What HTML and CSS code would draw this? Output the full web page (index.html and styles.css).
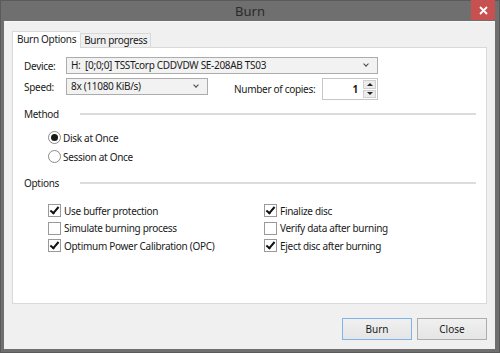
FILE: index.html
```html
<!DOCTYPE html>
<html lang="en">
<head>
    <meta charset="UTF-8">
    <title>Burn</title>
    <link rel="stylesheet" href="styles.css">
</head>
<body>
<div class="window">
    <div class="titlebar">
        <span></span>
        <span class="title">Burn</span>
        <span class="close">
            <svg width="9" height="9" viewBox="0 0 9 9"><path d="M1 1L8 8M8 1L1 8" stroke="#fff" stroke-width="1.8"/></svg>
        </span>
    </div>
    <div class="client">
        <div class="tabs">
            <div class="tab active">Burn Options</div>
            <div class="tab">Burn progress</div>
        </div>
        <div class="panel">
            <div class="row">
                <span class="lbl">Device:</span>
                <div class="select wide">H:&nbsp; [0;0;0] TSSTcorp CDDVDW SE-208AB TS03<span class="chev"></span></div>
            </div>
            <div class="row row2">
                <span class="lbl">Speed:</span>
                <div class="select narrow">8x (11080 KiB/s)<span class="chev"></span></div>
                <span class="copies">Number of copies:</span>
                <div class="spin">
                    <span class="val">1</span>
                    <span class="arrows">
                        <span class="up"></span>
                        <span class="down"></span>
                    </span>
                </div>
            </div>
            <div class="group">
                <span class="gtitle">Method</span><span class="gline"></span>
            </div>
            <div class="radios">
                <div class="opt"><span class="radio on"></span>Disk at Once</div>
                <div class="opt"><span class="radio"></span>Session at Once</div>
            </div>
            <div class="group group2">
                <span class="gtitle">Options</span><span class="gline"></span>
            </div>
            <div class="checks">
                <div class="opt"><span class="check on"></span>Use buffer protection</div>
                <div class="opt"><span class="check on"></span>Finalize disc</div>
                <div class="opt"><span class="check"></span>Simulate burning process</div>
                <div class="opt"><span class="check"></span>Verify data after burning</div>
                <div class="opt"><span class="check on"></span>Optimum Power Calibration (OPC)</div>
                <div class="opt"><span class="check on"></span>Eject disc after burning</div>
            </div>
        </div>
        <div class="buttons">
            <button class="btn default">Burn</button>
            <button class="btn">Close</button>
        </div>
    </div>
</div>
</body>
</html>
```

FILE: styles.css
```css
*{margin: 0; padding: 0; box-sizing: border-box;}
body{
    background: #6f6f6f;
    font-family: "Noto Sans", "Open Sans", sans-serif;
    font-size: 10px;
    letter-spacing: -0.3px;
    color: #1a1a1a;
}
.window{
    width: 500px;
    height: 353px;
    background: #6f6f6f;
    border: 1px solid #5a5a5a;
    display: flex;
    flex-direction: column;
}
.titlebar{
    height: 20px;
    display: grid;
    grid-template-columns: 1fr auto 1fr;
    align-items: center;
}
.title{
    font-size: 13px;
    letter-spacing: 0;
    color: #2a2a2a;
}
.close{
    justify-self: end;
    align-self: start;
    width: 24px;
    height: 20px;
    margin-right: 4px;
    margin-top: -1px;
    background: #c75050;
    display: flex;
    align-items: center;
    justify-content: center;
}
.client{
    margin: 0 4px 3px 3px;
    flex: 1;
    background: #f0f0f0;
    border-top: 1px solid #f7f7f7;
    padding: 9px 8px 0 8px;
    display: flex;
    flex-direction: column;
}
.tabs{
    display: flex;
    align-items: flex-end;
    height: 16px;
    position: relative;
    z-index: 1;
}
.tab{
    height: 14px;
    padding: 0 3px;
    border: 1px solid #d9d9d9;
    border-bottom: none;
    background: #f0f0f0;
    line-height: 12px;
}
.tab.active{
    height: 17px;
    background: #fff;
    margin-bottom: -1px;
    padding: 0 4px;
    line-height: 14px;
    border-right: none;
}
.panel{
    height: 257px;
    background: #fff;
    border: 1px solid #d9d9d9;
    padding: 9px 10px 0 11px;
}
.row{
    display: flex;
    align-items: center;
    height: 17px;
}
.row2{
    margin-top: 4px;
    height: 22px;
    align-items: flex-start;
}
.lbl{
    width: 42px;
    line-height: 18px;
}
.select{
    height: 17px;
    border: 1px solid #acacac;
    background: #f2f2f2;
    padding: 0 0 0 4px;
    line-height: 15px;
    display: flex;
    justify-content: space-between;
}
.select.wide{width: 312px;}
.select.narrow{width: 142px;}
.chev{
    width: 4px;
    height: 4px;
    border-right: 1px solid #444;
    border-bottom: 1px solid #444;
    transform: rotate(45deg);
    margin: 4px 9px 0 0;
}
.copies{
    margin-left: 26px;
    line-height: 22px;
    width: 88px;
}
.spin{
    width: 56px;
    height: 22px;
    border: 1px solid #c6c6c6;
    background: #fff;
    display: flex;
    justify-content: flex-end;
}
.val{
    line-height: 20px;
    font-weight: bold;
    padding-right: 5px;
}
.arrows{
    width: 14px;
    display: flex;
    flex-direction: column;
    gap: 1px;
    padding: 1px 1px 1px 0;
}
.arrows span{
    flex: 1;
    background: #ececec;
    border: 1px solid #d0d0d0;
    display: flex;
    align-items: center;
    justify-content: center;
}
.up::after, .down::after{
    content: "";
    border-left: 3px solid transparent;
    border-right: 3px solid transparent;
}
.up::after{border-bottom: 3px solid #222;}
.down::after{border-top: 3px solid #222;}
.group{
    display: flex;
    align-items: center;
    margin-top: 7px;
    height: 14px;
}
.group2{margin-top: 10px;}
.gtitle{
    width: 56px;
}
.gline{
    flex: 1;
    height: 2px;
    background: #dcdcdc;
}
.radios{
    margin: 7px 0 0 24px;
}
.opt{
    display: flex;
    align-items: center;
    height: 19px;
}
.radio{
    width: 13px;
    height: 13px;
    border: 1px solid #8a8a8a;
    border-radius: 50%;
    background: #fff;
    margin-right: 2px;
    display: flex;
    align-items: center;
    justify-content: center;
}
.radio.on::after{
    content: "";
    width: 7px;
    height: 7px;
    border-radius: 50%;
    background: #1a1a1a;
}
.checks{
    margin: 12px 0 0 24px;
    display: grid;
    grid-template-columns: 216px auto;
}
.checks .opt{height: 17.5px;}
.check{
    width: 13px;
    height: 13px;
    border: 1px solid #999;
    background: #fff;
    margin-right: 3px;
    position: relative;
}
.check.on::after{
    content: "";
    position: absolute;
    left: 3px;
    top: 0;
    width: 3px;
    height: 7px;
    border-right: 2px solid #111;
    border-bottom: 2px solid #111;
    transform: rotate(40deg);
}
.buttons{
    display: flex;
    justify-content: flex-end;
    gap: 5px;
    margin-top: 14px;
}
.btn{
    width: 70px;
    height: 22px;
    font: inherit;
    color: #1a1a1a;
    background: linear-gradient(#f0f0f0, #e5e5e5);
    border: 1px solid #acacac;
}
.btn.default{
    border-color: #7eb4ea;
}
```
